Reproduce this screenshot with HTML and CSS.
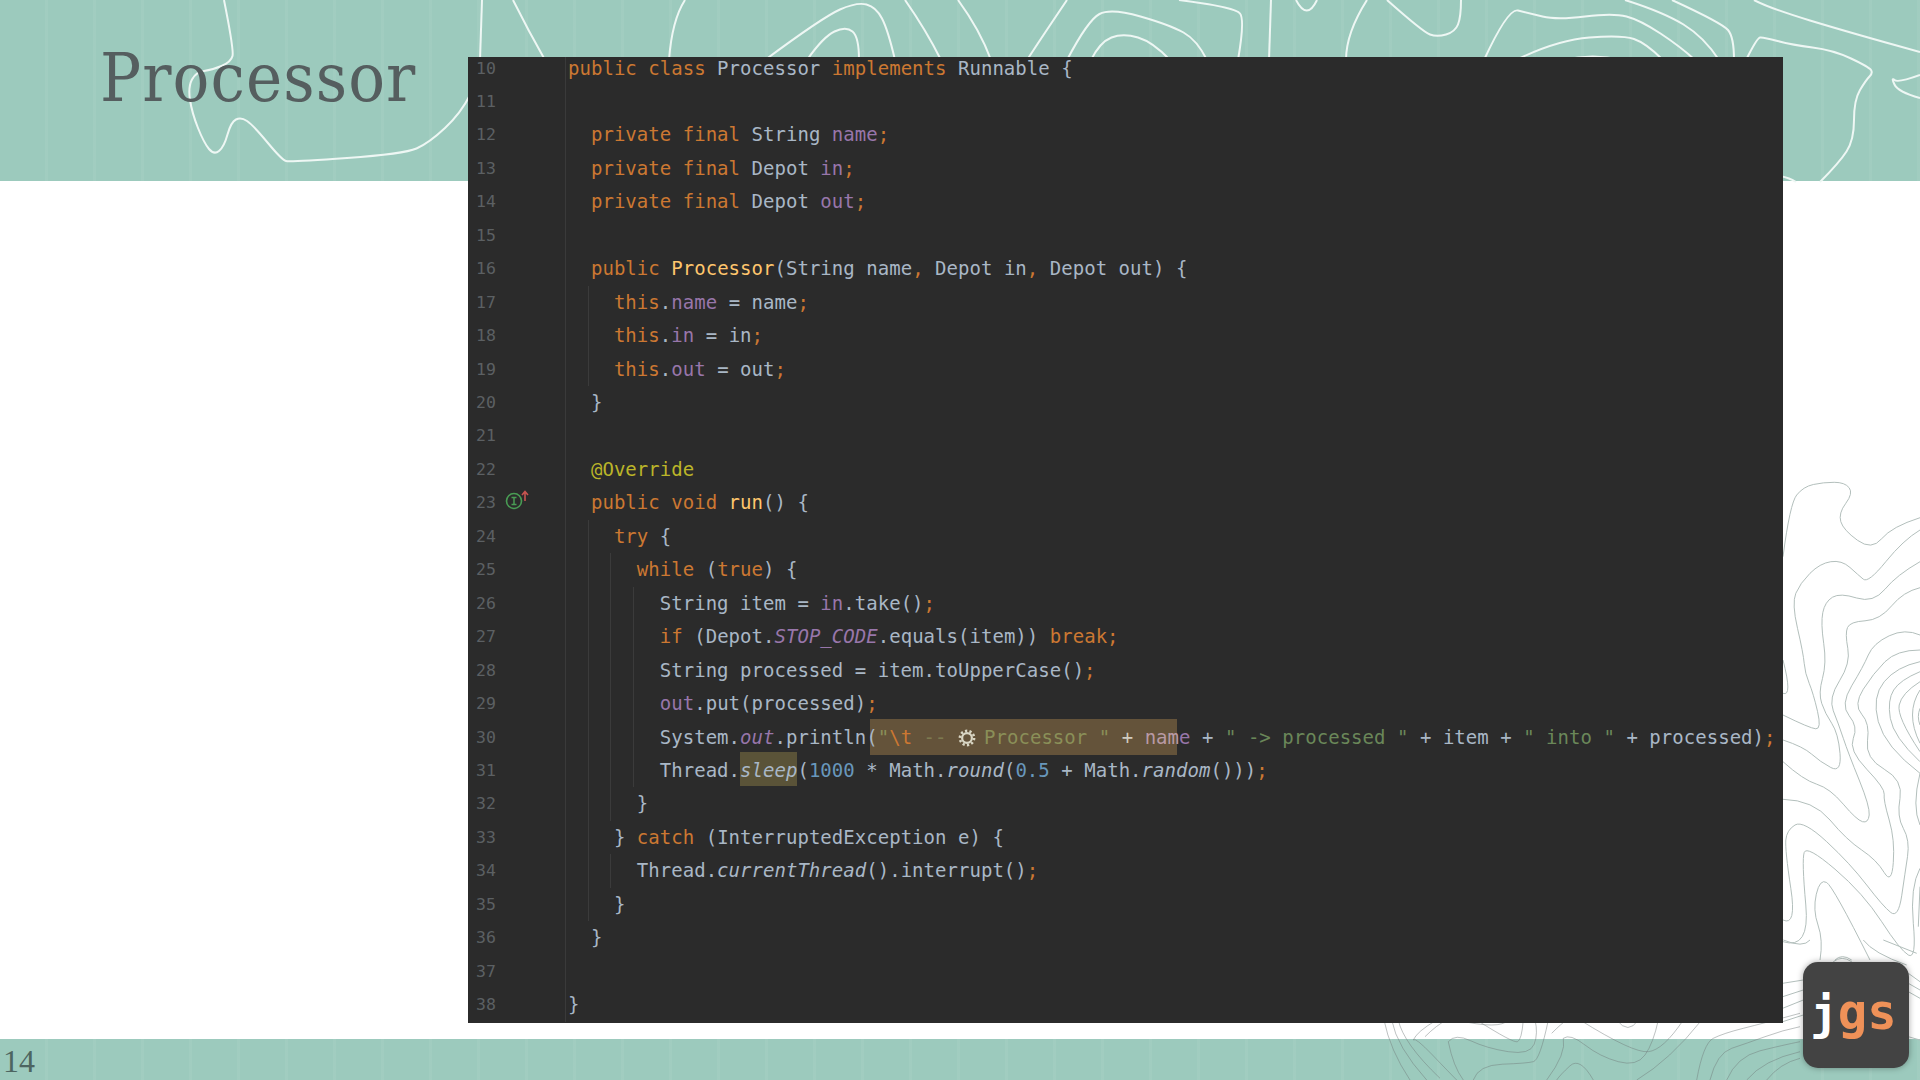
FILE: index.html
```html
<!DOCTYPE html>
<html lang="en">
<head>
<meta charset="utf-8">
<title>Processor</title>
<link rel="stylesheet" href="styles.css">
</head>
<body>
<div class="slide">
  <header class="head"><h1 class="title">Processor</h1></header>
  <svg class="contours" id="contours" viewBox="0 0 1920 1080" width="1920" height="1080" aria-hidden="true"></svg>
  <main class="panel">
    <div class="code">
      <div class="row"><span class="num">10</span><span class="gut"></span><span class="src"><span class="k">public class </span>Processor <span class="k">implements </span>Runnable {</span></div>
      <div class="row"><span class="num">11</span><span class="gut"></span><span class="src"></span></div>
      <div class="row"><span class="num">12</span><span class="gut"></span><span class="src">  <span class="k">private final </span>String <span class="f">name</span><span class="k">;</span></span></div>
      <div class="row"><span class="num">13</span><span class="gut"></span><span class="src">  <span class="k">private final </span>Depot <span class="f">in</span><span class="k">;</span></span></div>
      <div class="row"><span class="num">14</span><span class="gut"></span><span class="src">  <span class="k">private final </span>Depot <span class="f">out</span><span class="k">;</span></span></div>
      <div class="row"><span class="num">15</span><span class="gut"></span><span class="src"></span></div>
      <div class="row"><span class="num">16</span><span class="gut"></span><span class="src">  <span class="k">public </span><span class="m">Processor</span>(String name<span class="k">, </span>Depot in<span class="k">, </span>Depot out) {</span></div>
      <div class="row"><span class="num">17</span><span class="gut"></span><span class="src g1">    <span class="k">this</span>.<span class="f">name</span> = name<span class="k">;</span></span></div>
      <div class="row"><span class="num">18</span><span class="gut"></span><span class="src g1">    <span class="k">this</span>.<span class="f">in</span> = in<span class="k">;</span></span></div>
      <div class="row"><span class="num">19</span><span class="gut"></span><span class="src g1">    <span class="k">this</span>.<span class="f">out</span> = out<span class="k">;</span></span></div>
      <div class="row"><span class="num">20</span><span class="gut"></span><span class="src">  }</span></div>
      <div class="row"><span class="num">21</span><span class="gut"></span><span class="src"></span></div>
      <div class="row"><span class="num">22</span><span class="gut"></span><span class="src">  <span class="a">@Override</span></span></div>
      <div class="row"><span class="num">23</span><span class="gut">
        <svg class="mark" viewBox="0 0 26 24" width="26" height="24" aria-hidden="true">
          <circle cx="9" cy="13" r="7.5" fill="none" stroke="#499c54" stroke-width="1.6"/>
          <path d="M6.5 9.5h5M6.5 16.5h5M9 9.5v7" fill="none" stroke="#499c54" stroke-width="1.5"/>
          <path d="M20 13V4M17 7l3-3.5L23 7" fill="none" stroke="#c75450" stroke-width="1.6"/>
        </svg></span><span class="src">  <span class="k">public void </span><span class="m">run</span>() {</span></div>
      <div class="row"><span class="num">24</span><span class="gut"></span><span class="src g1">    <span class="k">try </span>{</span></div>
      <div class="row"><span class="num">25</span><span class="gut"></span><span class="src g2">      <span class="k">while </span>(<span class="k">true</span>) {</span></div>
      <div class="row"><span class="num">26</span><span class="gut"></span><span class="src g3">        String item = <span class="f">in</span>.take()<span class="k">;</span></span></div>
      <div class="row"><span class="num">27</span><span class="gut"></span><span class="src g3">        <span class="k">if </span>(Depot.<span class="f i">STOP_CODE</span>.equals(item)) <span class="k">break;</span></span></div>
      <div class="row"><span class="num">28</span><span class="gut"></span><span class="src g3">        String processed = item.toUpperCase()<span class="k">;</span></span></div>
      <div class="row"><span class="num">29</span><span class="gut"></span><span class="src g3">        <span class="f">out</span>.put(processed)<span class="k">;</span></span></div>
      <div class="row"><span class="num">30</span><span class="gut"></span><span class="src g3"><span class="hl-range"></span><span class="txt">        System.<span class="f i">out</span>.println(<span class="sh">"</span><span class="k">\t</span><span class="sd"> -- </span><svg class="gear" viewBox="0 0 24 24" aria-hidden="true"><circle cx="12" cy="12" r="6.5" fill="none" stroke="#d9d6c4" stroke-width="3"/><circle cx="12" cy="12" r="9.5" fill="none" stroke="#d9d6c4" stroke-width="3.4" stroke-dasharray="3 2.97"/></svg><span class="sh">Processor " </span><span class="pl">+ </span><span class="nm">nam</span><span class="f">e</span> + <span class="s">" -&gt; processed "</span> + item + <span class="s">" into "</span> + processed)<span class="k">;</span></span></span></div>
      <div class="row"><span class="num">31</span><span class="gut"></span><span class="src g3">        Thread.<span class="i hl-word">sleep</span>(<span class="n">1000</span> * Math.<span class="i">round</span>(<span class="n">0.5</span> + Math.<span class="i">random</span>()))<span class="k">;</span></span></div>
      <div class="row"><span class="num">32</span><span class="gut"></span><span class="src g2">      }</span></div>
      <div class="row"><span class="num">33</span><span class="gut"></span><span class="src g1">    } <span class="k">catch </span>(InterruptedException e) {</span></div>
      <div class="row"><span class="num">34</span><span class="gut"></span><span class="src g2">      Thread.<span class="i">currentThread</span>().interrupt()<span class="k">;</span></span></div>
      <div class="row"><span class="num">35</span><span class="gut"></span><span class="src g1">    }</span></div>
      <div class="row"><span class="num">36</span><span class="gut"></span><span class="src">  }</span></div>
      <div class="row"><span class="num">37</span><span class="gut"></span><span class="src"></span></div>
      <div class="row"><span class="num">38</span><span class="gut"></span><span class="src">}</span></div>
    </div>
  </main>
  <footer class="foot"><span class="page">14</span></footer>
  <div class="logo"><span class="logo-j">j</span><span class="logo-gs">gs</span></div>
</div>
<script src="contours.js"></script>
</body>
</html>
```
FILE: styles.css
```css
* { box-sizing: border-box; }
html, body { margin: 0; padding: 0; background: #fff; }
.slide {
  position: relative;
  width: 1920px;
  height: 1080px;
  overflow: hidden;
  display: grid;
  grid-template-columns: 468px 1315px 137px;
  grid-template-rows: 181px 1fr 41px;
  background: #fff;
}
.head, .foot {
  grid-column: 1 / -1;
  background-color: #9ccabd;
  background-image: repeating-linear-gradient(90deg, rgba(255,255,255,0) 0 45px, rgba(255,255,255,.05) 45px 48px);
}
.head { grid-row: 1; padding: 37px 0 0 100px; }
.foot { grid-row: 3; padding: 6px 0 0 3px; }
.title {
  position: relative;
  z-index: 1;
  margin: 0;
  font: 400 68px/1.2 "DejaVu Serif", serif;
  font-stretch: condensed;
  letter-spacing: 1.1px;
  color: #555e5f;
}
.page {
  position: relative;
  z-index: 1;
  display: block;
  font: 400 32px/1 "Liberation Serif", serif;
  color: #4d6561;
}
.contours { position: absolute; left: 0; top: 0; }
.contours path { fill: none; }
.c-white { stroke: #eef7f4; stroke-width: 2; }
.c-grey { stroke: #b3bfbc; stroke-width: 1; }
.c-foot { stroke: rgba(110,120,120,.45); stroke-width: 1; }

.panel {
  grid-column: 2;
  grid-row: 1 / -1;
  margin: 57px 0;
  background: #2b2b2b;
  overflow: hidden;
  position: relative;
  z-index: 1;
}
.code { margin-top: -5.5px; font: 400 19px/1 "DejaVu Sans Mono", monospace; letter-spacing: .03px; color: #a9b7c6; }
.row { display: flex; height: 33.46px; align-items: stretch; }
.num { flex: 0 0 57px; padding-left: 8px; font-size: 16.5px; line-height: 33.5px; letter-spacing: 0; color: #5c6063; }
.gut { flex: 0 0 41px; border-right: 1px solid #3a3a3a; position: relative; }
.mark { display: block; margin: 2px 0 0 -20px; }
.src {
  flex: 1;
  position: relative;
  padding-left: 2px;
  white-space: pre;
  line-height: 33.5px;
  background-repeat: no-repeat;
  background-size: 1px 100%;
  background-image: linear-gradient(#3b3b3b, #3b3b3b), linear-gradient(#3b3b3b, #3b3b3b), linear-gradient(#3b3b3b, #3b3b3b);
  background-position: -9px 0, -9px 0, -9px 0;
}
.g1 { background-position: 22px 0, -9px 0, -9px 0; }
.g2 { background-position: 22px 0, 44px 0, -9px 0; }
.g3 { background-position: 22px 0, 44px 0, 67px 0; }
.k { color: #cc7832; }
.f { color: #9876aa; }
.m { color: #ffc66d; }
.s { color: #6a8759; }
.sh { color: #8a8f58; }
.sd { color: #7d7a50; }
.n { color: #6897bb; }
.a { color: #bbb529; }
.i { font-style: italic; }
.nm { color: #b89aa5; }
.pl { color: #d0ccc0; }
.txt { position: relative; }
.hl-range {
  position: absolute;
  left: 304px;
  top: -2px;
  width: 307px;
  height: 36px;
  background: #64533a;
}
.hl-word { display: inline-block; height: 34px; margin-top: -2px; line-height: 37px; vertical-align: top; background: #5a5338; }
.gear { display: inline-block; width: 18px; height: 18px; margin: 0 8px 0 0; vertical-align: -3px; }

.logo {
  position: absolute;
  left: 1803px;
  top: 962px;
  width: 106px;
  height: 106px;
  padding-bottom: 5px;
  border-radius: 15px;
  background: #434343;
  box-shadow: 0 0 6px rgba(0,0,0,.35);
  z-index: 2;
  display: flex;
  align-items: center;
  justify-content: center;
  font: 700 46px/1 "DejaVu Sans Mono", monospace;
}
.logo-j { color: #fff; margin-left: -5px; }
.logo-gs { color: #ef9158; font-size: 49px; line-height: 46px; }
```
FILE: contours.js
```js
// Decorative contour lines: each is a list of traced points, smoothed into a curve.
var groups = [
  { cls: 'c-white', sx: 1, sy: 1, ox: 0, oy: 0, lines: [
    [224,0,234,50,231,62,212,70,196,72,188,87,192,113,204,143,214,155,224,147,231,122,241,117,253,125,282,160,290,162,404,154,429,143,461,113,470,95],
    [482,0,480,60],[513,0,528,30,545,60],
    [685,0,672,20,669,60],
    [765,60,823,17,857,2,876,7,888,30,895,60],
    [807,60,823,37,846,26,859,37,859,60],
    [905,0,926,30,941,60],[958,0,980,30,991,60],
    [1067,0,1040,40,1027,60],
    [1067,60,1088,20,1111,8,1170,25,1197,40,1207,60],
    [1091,60,1100,42,1123,33,1153,42,1170,60],
    [1179,0,1235,7,1245,20,1238,60],
    [1271,0,1269,60],[1296,0,1307,21,1317,0],
    [1367,0,1346,33,1346,60],
    [1387,0,1423,32,1437,37,1455,32,1461,17,1461,0],
    [1484,60,1508,8,1528,13,1557,20,1613,13,1640,20,1681,47,1695,60],
    [1516,60,1557,40,1622,35,1646,43,1663,60],
    [1563,60,1593,53,1622,60],
    [1625,0,1663,12,1704,37,1719,60],
    [1672,0,1722,23,1734,37,1734,60],
    [1746,60,1757,38,1763,37,1792,45,1833,50,1869,67,1873,73,1866,80,1854,100,1854,140,1839,163,1820,182],
    [1754,0,1769,8,1851,33,1920,52],
    [1920,75,1898,83,1891,77,1898,92,1920,98],
    [1780,176,1790,178,1796,182]
  ]},
  { cls: 'c-grey', sx: 1/3, sy: 1/3, ox: 1770, oy: 460, lines: [
    [39,290,60,130,100,80,160,67,225,67,250,100,205,160,220,210,305,272,365,200,450,173],
    [450,210,400,240,295,370,265,345,215,300,150,310,90,370,65,430,100,580,105,640,130,700,155,808,120,805,39,765],
    [39,600,68,712,39,700],
    [450,305,380,345,310,430,210,398,165,425,152,490,170,610,145,700,165,760,205,820,215,940,150,905,100,860,39,840],
    [450,383,400,395,330,480,240,485,225,520,242,610,175,715,205,790,235,880,300,1040,295,1090,260,1080,180,985,100,960,39,905],
    [450,525,405,505,310,550,280,620,210,735,265,800,235,870,345,985,340,1020,375,1140,365,1275,320,1200,230,1140,130,1020,39,1018],
    [450,570,380,570,310,640,250,735,300,790,285,895,400,960,380,1070,420,1140,405,1240,385,1375,340,1340,240,1210,100,1080,50,1110,45,1170,80,1400,39,1380],
    [450,605,380,620,305,710,345,860,450,940],
    [450,635,390,660,352,720,370,830,450,905],
    [450,665,395,700,380,770,450,875],
    [450,690,405,760,450,850],
    [450,745,440,770,450,795],
    [450,940,425,1040,450,1095],
    [450,1225,420,1280,440,1500,390,1470,280,1300,110,1155,95,1200,120,1470,39,1445],
    [150,1500,160,1440,128,1350,150,1255,190,1280,300,1500],
    [450,1280,445,1400],
    [195,1500,215,1480,245,1500]
  ]},
  { cls: 'c-grey', sx: 1/3, sy: 1/3, ox: 1760, oy: 940, lines: [
    [68,130,130,120],[68,170,130,150],[68,205,130,180],[68,245,130,225],
    [445,100,480,125],[445,130,480,150],[445,155,480,175],[445,290,480,300],
    [70,0,130,25,150,0],[220,65,245,45,275,65],[310,0,340,40,440,75],[370,0,470,40]
  ]},
  { cls: 'c-foot', sx: 1/3, sy: 1/3, ox: 1300, oy: 1000, lines: [
    [252,60,270,150,330,240],[275,60,290,140,380,240],[295,60,310,130,420,235],
    [340,120,345,110,450,220,470,240],[410,60,350,95,340,120],
    [375,110,410,75,440,60],
    [445,125,465,100,560,145,690,165,715,100,705,60],
    [445,125,460,200,490,240],
    [470,60,600,90,625,60],[530,60,640,130,665,120,670,60],
    [520,240,535,195,680,190,720,180,745,60],
    [755,100,785,70,800,60],
    [790,115,810,100,900,170,1010,200,1060,130,1075,60],
    [790,115,800,160,740,240],
    [950,60,985,105,1015,60],
    [840,60,1000,160,1090,150,1150,60],
    [1010,240,1110,180,1205,60],
    [880,240,840,170,780,225,770,240],
    [1190,240,1210,130,1270,100,1390,70,1500,40],
    [1230,240,1250,160,1340,130,1450,90,1500,80],
    [1280,240,1310,170,1450,135,1500,125],
    [1340,240,1390,180,1500,155],
    [1400,240,1440,190,1500,175],
    [1250,60,1320,75,1350,60]
  ]}
];

var svg = document.getElementById('contours');
groups.forEach(function (g) {
  g.lines.forEach(function (l) {
    var pts = [];
    for (var i = 0; i < l.length; i += 2) {
      pts.push([g.ox + l[i] * g.sx, g.oy + l[i + 1] * g.sy]);
    }
    var d = 'M' + pts[0][0].toFixed(1) + ' ' + pts[0][1].toFixed(1);
    for (var j = 1; j < pts.length - 1; j++) {
      var mx = (pts[j][0] + pts[j + 1][0]) / 2, my = (pts[j][1] + pts[j + 1][1]) / 2;
      if (j === pts.length - 2) { mx = pts[j + 1][0]; my = pts[j + 1][1]; }
      d += 'Q' + pts[j][0].toFixed(1) + ' ' + pts[j][1].toFixed(1) + ' ' + mx.toFixed(1) + ' ' + my.toFixed(1);
    }
    if (pts.length === 2) d += 'L' + pts[1][0].toFixed(1) + ' ' + pts[1][1].toFixed(1);
    var p = document.createElementNS('http://www.w3.org/2000/svg', 'path');
    p.setAttribute('d', d);
    p.setAttribute('class', g.cls);
    svg.appendChild(p);
  });
});
```
